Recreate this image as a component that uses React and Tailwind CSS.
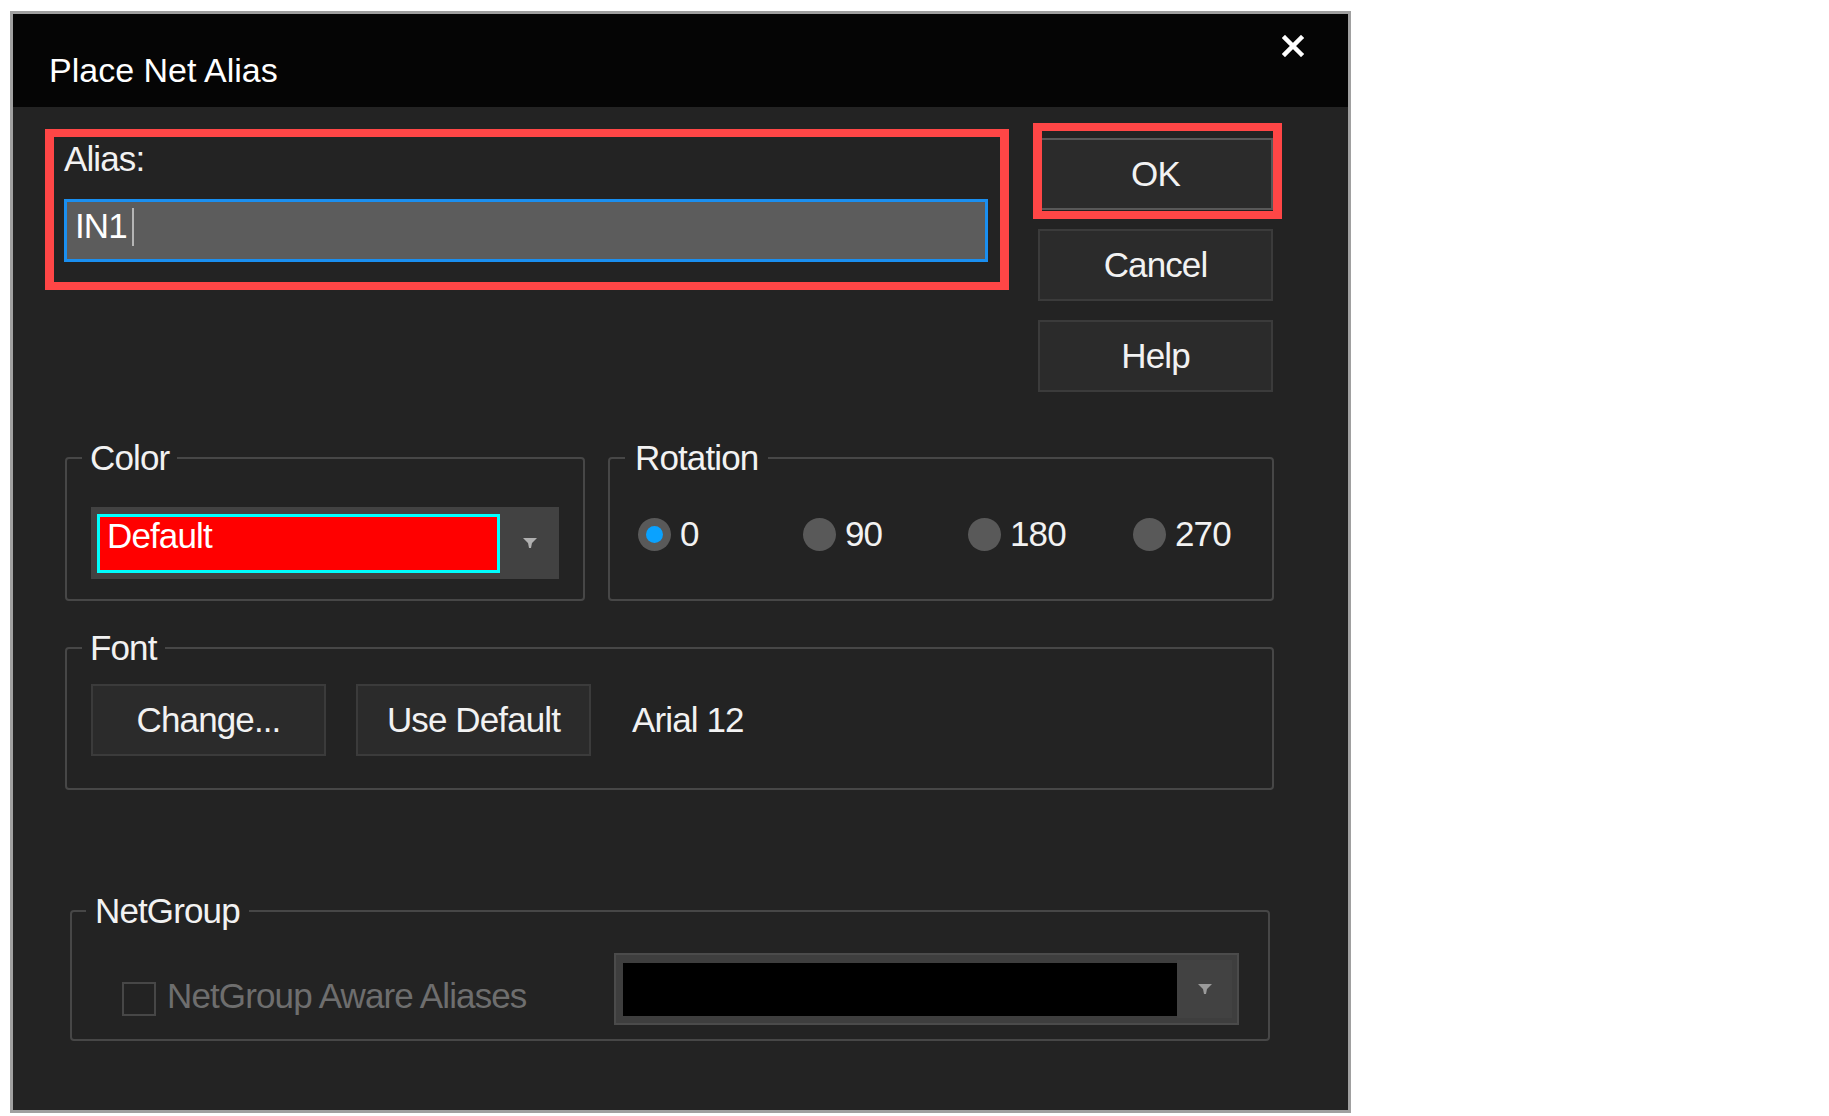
import React from "react";

const uiFont = "font-['Liberation_Sans',Arial,sans-serif]";

function Arrow({ color = "#b0b0b0" }) {
    return (
        <svg width="14" height="10" viewBox="0 0 14 10">
            <polygon points="0,0 14,0 9,5 8,10 6,10 5,5" fill={color} />
        </svg>
    );
}

function Button({ children, className = "" }) {
    return (
        <div
            className={`h-[72px] w-[235px] flex items-center justify-center bg-[#2b2b2b] border-2 border-[#3b3b3b] text-[#f2f2f2] ${className}`}
        >
            {children}
        </div>
    );
}

function Radio({ label, checked, className = "w-[165px]" }) {
    return (
        <div className={`flex items-center gap-[9px] shrink-0 ${className}`}>
            <div className="w-[33px] h-[33px] rounded-full bg-[#595959] flex items-center justify-center">
                {checked && (
                    <div className="w-[17px] h-[17px] rounded-full bg-[#0aa2ff]" />
                )}
            </div>
            <span>{label}</span>
        </div>
    );
}

function Group({ title, className = "", legendClass = "ml-[15px] px-[8px]", children }) {
    return (
        <fieldset className={`min-w-0 border-2 border-[#474747] rounded-[4px] ${className}`}>
            <legend className={`leading-[38px] text-[#f2f2f2] ${legendClass}`}>
                {title}
            </legend>
            {children}
        </fieldset>
    );
}

export default function App() {
    return (
        <div className={`min-h-screen w-full bg-white pt-[11px] pl-[10px] ${uiFont} text-[35px] leading-[38px] tracking-[-0.025em]`}>
            <div className="w-[1341px] h-[1102px] border-[3px] border-[#a0a0a0] bg-[#232323] flex flex-col text-[#f2f2f2]">
                {/* title bar */}
                <div className="h-[93px] shrink-0 bg-[#050505] flex items-start">
                    <span className="ml-[36px] mt-[39px] text-[34px] leading-[34px] tracking-normal text-white">
                        Place Net Alias
                    </span>
                    <svg
                        className="ml-auto mt-[21px] mr-[44px]"
                        width="22"
                        height="22"
                        viewBox="0 0 22 22"
                    >
                        <path
                            d="M3 3 L19 19 M19 3 L3 19"
                            stroke="#ffffff"
                            strokeWidth="4.5"
                            strokeLinecap="square"
                        />
                    </svg>
                </div>

                {/* body */}
                <div className="flex flex-col">
                    <div className="flex items-start mt-[22px]">
                        <div className="ml-[32px] w-[964px] h-[161px] border-x-[9px] border-y-[8px] border-[#ff4646] flex flex-col">
                            <span className="ml-[10px] mt-[3px]">Alias:</span>
                            <div className="ml-[10px] mt-[21px] w-[924px] h-[63px] border-[3px] border-[#1a8ff0] bg-[#5c5c5c] flex items-start pl-[8px] pt-[5px]">
                                <span className="text-white">IN1</span>
                                <span className="ml-[5px] mt-[1px] w-[2px] h-[38px] bg-[#b5b5b5]" />
                            </div>
                        </div>
                        <div className="ml-[29px] mt-[9px] flex flex-col gap-[19px]">
                            <div className="relative">
                                <Button className="border-[#585858]">OK</Button>
                                <div className="absolute -left-[5px] -top-[15px] w-[249px] h-[96px] border-x-[9px] border-y-[8px] border-[#ff4646]" />
                            </div>
                            <Button>Cancel</Button>
                            <Button>Help</Button>
                        </div>
                    </div>

                    <div className="flex mt-[47px] ml-[52px]">
                        <Group title="Color" className="w-[520px] shrink-0">
                            <div className="pt-[30px] pl-[24px] pb-[20px]">
                                <div className="w-[468px] h-[72px] bg-[#424242] flex items-center pl-[6px]">
                                    <div className="w-[403px] h-[59px] border-[3px] border-[#00ffff] bg-[#ff0000] pl-[7px] text-white">
                                        Default
                                    </div>
                                    <div className="flex-1 flex items-center justify-center">
                                        <Arrow />
                                    </div>
                                </div>
                            </div>
                        </Group>
                        <Group title="Rotation" className="w-[666px] shrink-0 ml-[23px]" legendClass="ml-[15px] px-[10px]">
                            <div className="pt-[40px] pl-[28px] flex h-[74px] items-center">
                                <Radio label="0" checked />
                                <Radio label="90" />
                                <Radio label="180" />
                                <Radio label="270" className="" />
                            </div>
                        </Group>
                    </div>

                    <Group title="Font" className="w-[1209px] mt-[28px] ml-[52px]">
                        <div className="flex items-center pt-[17px] pl-[24px] pb-[32px]">
                            <Button className="w-[233px] h-[70px]">Change...</Button>
                            <Button className="w-[232px] h-[70px] ml-[30px]">Use Default</Button>
                            <span className="ml-[41px]">Arial 12</span>
                        </div>
                    </Group>

                    <Group
                        title="NetGroup"
                        className="w-[1200px] mt-[102px] ml-[57px]"
                        legendClass="ml-[14px] px-[9px]"
                    >
                        <div className="flex items-start pt-[23px] pl-[50px] pb-[14px]">
                            <div className="w-[492px] flex items-start pt-[24px]">
                                <div className="mt-[5px] w-[34px] h-[34px] border-2 border-[#474747]" />
                                <span className="ml-[11px] text-[#6e6e6e]">NetGroup Aware Aliases</span>
                            </div>
                            <div className="w-[625px] h-[72px] bg-[#3e3e3e] border-2 border-[#4b4b4b] flex items-center pl-[7px] pr-[5px]">
                                <div className="w-[554px] h-[53px] bg-black" />
                                <div className="flex-1 h-[58px] bg-[#424242] flex items-center justify-center">
                                    <Arrow color="#9a9a9a" />
                                </div>
                            </div>
                        </div>
                    </Group>
                </div>
            </div>
        </div>
    );
}
